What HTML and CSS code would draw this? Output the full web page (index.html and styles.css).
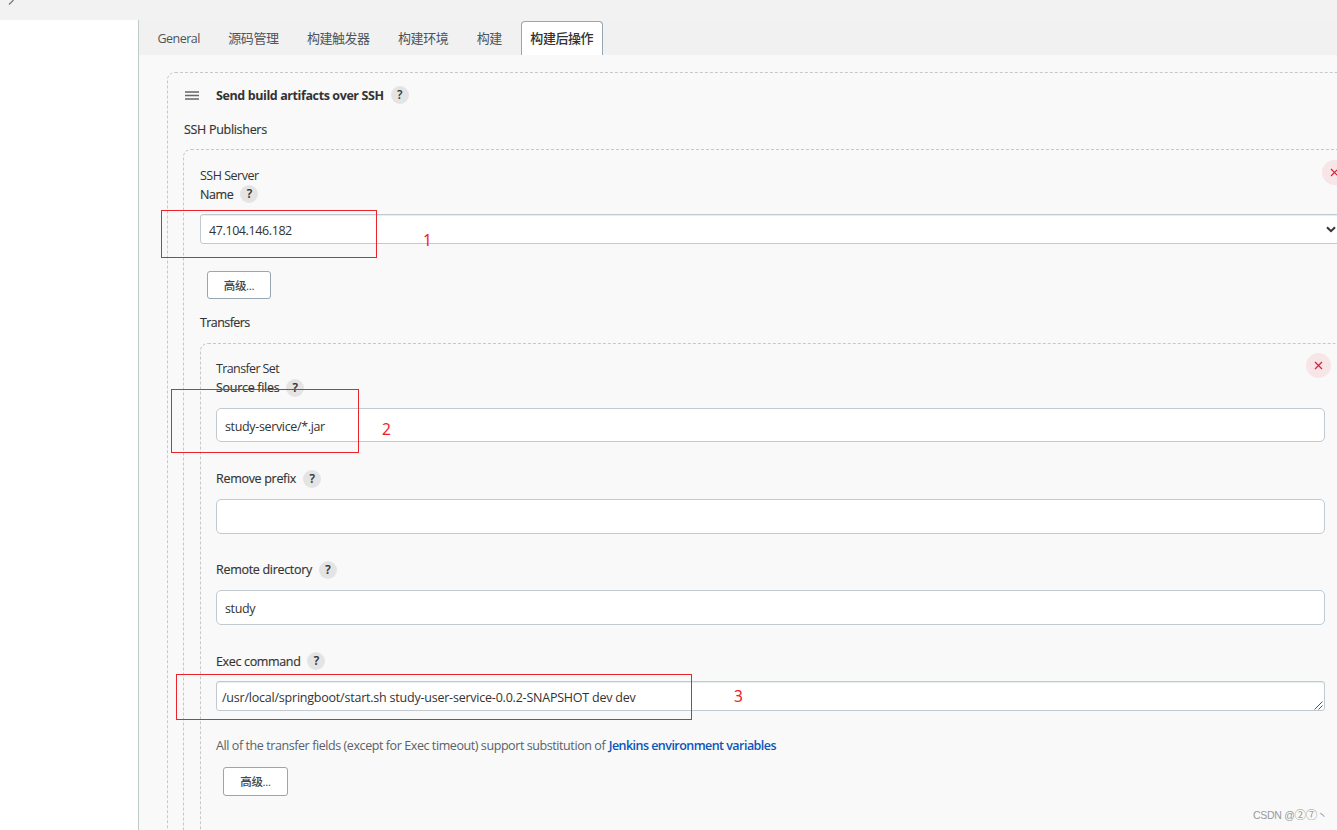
FILE: index.html
```html
<!DOCTYPE html>
<html lang="zh-CN">
<head>
<meta charset="utf-8">
<title>构建后操作</title>
<link rel="stylesheet" href="styles.css">
</head>
<body>
<div class="page">
  <header class="crumbs"><svg class="chevron" width="8" height="6" viewBox="0 0 8 6"><path d="M1 4.5L5.5 0" fill="none" stroke="#777" stroke-width="1.2"/></svg></header>
  <div class="columns">
    <aside class="side"></aside>
    <main class="main">
      <nav class="tabs">
        <a class="tab general">General</a><a class="tab">源码管理</a><a class="tab">构建触发器</a><a class="tab">构建环境</a><a class="tab">构建</a><a class="tab active">构建后操作</a>
      </nav>
      <section class="box outer">
        <div class="heading">
          <svg class="grip" width="14" height="9" viewBox="0 0 14 9"><path d="M0 1h14M0 4.5h14M0 8h14" stroke="#666" stroke-width="1.5"/></svg>
          <b class="title">Send build artifacts over SSH</b><i class="help">?</i>
        </div>
        <div class="publishers strong"><span>SSH Publishers</span></div>
        <section class="box server">
          <button class="remove"><svg width="9" height="9" viewBox="0 0 9 9"><path d="M1 1l7 7M8 1l-7 7"/></svg></button>
          <div class="row group-name"><span>SSH Server</span></div>
          <div class="row strong name"><span>Name</span><i class="help">?</i></div>
          <div class="field select"><span class="ip">47.104.146.182</span><svg class="arrow" width="10" height="7" viewBox="0 0 10 7"><path d="M1 1.2l4 4 4-4" fill="none" stroke="#333" stroke-width="2"/></svg></div>
          <button class="advanced">高级...</button>
          <div class="row strong transfers"><span>Transfers</span></div>
          <section class="box transfer">
            <button class="remove"><svg width="9" height="9" viewBox="0 0 9 9"><path d="M1 1l7 7M8 1l-7 7"/></svg></button>
            <div class="row group-name"><span>Transfer Set</span></div>
            <div class="row strong"><span>Source files</span><i class="help">?</i></div>
            <div class="field source"><span class="source-text">study-service/*.jar</span></div>
            <div class="row strong prefix"><span>Remove prefix</span><i class="help">?</i></div>
            <div class="field"></div>
            <div class="row strong next"><span>Remote directory</span><i class="help">?</i></div>
            <div class="field"><span>study</span></div>
            <div class="row strong next exec"><span>Exec command</span><i class="help">?</i></div>
            <div class="field command"><span class="command-text">/usr/local/springboot/start.sh study-user-service-0.0.2-SNAPSHOT dev dev</span><svg class="resize" width="9" height="9" viewBox="0 0 9 9"><path d="M.5 8.5l8-8M4.5 8.5l4-4" stroke="#555"/></svg></div>
            <div class="row note"><span>All of the transfer fields (except for Exec timeout) support substitution of</span><a class="link">Jenkins environment variables</a></div>
            <button class="advanced wide">高级...</button>
          </section>
        </section>
      </section>
    </main>
  </div>
  <div class="mark mark-one"></div><span class="digit digit-one">1</span>
  <div class="mark mark-two"></div><span class="digit digit-two">2</span>
  <div class="mark mark-three"></div><span class="digit digit-three">3</span>
  <span class="watermark">CSDN @<span class="circled">②⑦</span>丶</span>
</div>
</body>
</html>
```

FILE: styles.css
```css
* { box-sizing: border-box; }
body { margin: 0; }
.page {
  position: relative; width: 1337px; height: 830px; overflow: hidden;
  display: flex; flex-direction: column; background: #f9f9f9; color: #333;
  font: 12.5px/19px "Open Sans", "Noto Sans CJK SC", sans-serif; letter-spacing: -.3px;
  white-space: nowrap;
}
.crumbs { height: 20px; flex: none; background: #f2f2f2; }
.chevron { display: block; margin-left: 8px; }
.columns { display: flex; height: 810px; }
.side { width: 138px; flex: none; background: #fff; }
.main { flex: 1; min-width: 0; border-left: 1px solid #bfcbcb; }
.tabs { display: flex; height: 35px; padding: 1px 0 0 8.4px; background: #f1f1f1; color: #4d545d; font-size: 13px; letter-spacing: -.45px; }
.tab { padding: 0 10px; margin-right: 8.4px; line-height: 34px; }
.general { font-size: 12.5px; letter-spacing: -.5px; line-height: 35px; }
.active { width: 82px; margin-left: .8px; border: 1px solid #98a5b3; border-bottom: 0; border-radius: 4px 4px 0 0; padding: 0 8.4px; line-height: 32px; background: #fff; color: #333; font-weight: 500; }

.box { position: relative; border: 1px dashed #c3c9cc; border-radius: 8px; }
.outer { width: 1207px; height: 900px; margin: 17px 0 0 28px; padding: 0 15px; }
.server { width: 1175px; height: 800px; margin-top: 8px; padding: 16px 15px 0 16px; }
.transfer { width: 1142px; height: 600px; margin-top: 11px; padding: 15px 16px 0 15px; }
.heading { display: flex; align-items: center; height: 44px; padding-left: 2px; }
.grip { margin-right: 17px; }
.title { font-weight: 700; letter-spacing: -.4px; }
.publishers { height: 24px; line-height: 26px; padding-left: 1px; }
.row { display: flex; align-items: center; height: 19px; }
.strong { font-weight: 500; -webkit-text-stroke: .15px #333; }
.group-name { letter-spacing: -.5px; }
.transfer .group-name { letter-spacing: -.62px; }
.help {
  width: 18px; height: 18px; margin-left: 7px; border-radius: 50%; background: #e4e4e4;
  font-style: normal; font-weight: 600; font-size: 12px; line-height: 18px; text-align: center; letter-spacing: 0;
}
.name .help { margin: -1px 0 0 7px; }
.name { letter-spacing: -.4px; }
.exec { letter-spacing: -.35px; }
.exec span { position: relative; top: 1px; }
.field {
  display: flex; align-items: center; height: 35px; margin-top: 11px; padding: 1px 8px 0;
  border: 1px solid #c1cad0; border-radius: 5px; background: #fff; letter-spacing: -.35px;
}
.select { width: 1150px; height: 30px; margin-top: 10px; padding-top: 2px; border-radius: 3px; box-shadow: inset 0 1px #e8eded; }
.ip { letter-spacing: -.4px; }
.arrow { margin-left: auto; margin-right: 5px; margin-top: -2px; }
.source { height: 34px; padding-top: 3px; }
.command { height: 30px; padding: 2px 0 0 5px; border-radius: 3px; box-shadow: inset 0 1px #e8eded; letter-spacing: -.22px; }
.resize { margin-left: auto; align-self: flex-end; margin-right: 1px; }
.advanced {
  display: block; width: 64px; height: 28px; margin: 27px 0 0 7px; padding: 0;
  border: 1px solid #98a5b3; border-radius: 3px; background: #fff; color: #40474f;
  font: 500 11.5px/27px "Open Sans", "Noto Sans CJK SC", sans-serif; letter-spacing: -.3px;
}
.wide { width: 65px; height: 29px; margin-top: 12px; line-height: 28px; }
.transfers { margin-top: 14px; letter-spacing: -.57px; }
.prefix { margin-top: 27px; }
.next { margin-top: 26px; }
.note { margin-top: 25px; color: #5a616b; letter-spacing: -.42px; }
.link { margin-left: 3.5px; color: #0b55b8; font-weight: 600; letter-spacing: -.54px; }
.remove {
  position: absolute; top: 10px; right: 10px; width: 25px; height: 25px; padding: 0;
  display: grid; place-items: center; border: 0; border-radius: 50%; background: #f7e5e7;
}
.transfer .remove { top: 9px; }
.remove path { fill: none; stroke: #dc1f3b; stroke-width: 1.2; }

.mark { position: absolute; border: 1px solid #ec2329; }
.mark-one { left: 161px; top: 210px; width: 216px; height: 48px; }
.mark-two { left: 171px; top: 389px; width: 188px; height: 64px; }
.mark-three { left: 176px; top: 674px; width: 516px; height: 46px; }
.digit { position: absolute; color: #f01c24; font: 15.5px/20px "Noto Sans", sans-serif; letter-spacing: 0; }
.digit-one { left: 423px; top: 230px; }
.digit-two { left: 382px; top: 419px; }
.digit-three { left: 734px; top: 686px; }
.watermark { position: absolute; left: 1253px; top: 805px; color: #999; font: 10.5px/18px "Liberation Sans", "Noto Sans CJK SC", sans-serif; letter-spacing: -.3px; }
.circled { font: 11.5px/18px "Noto Sans CJK SC", sans-serif; }
```
